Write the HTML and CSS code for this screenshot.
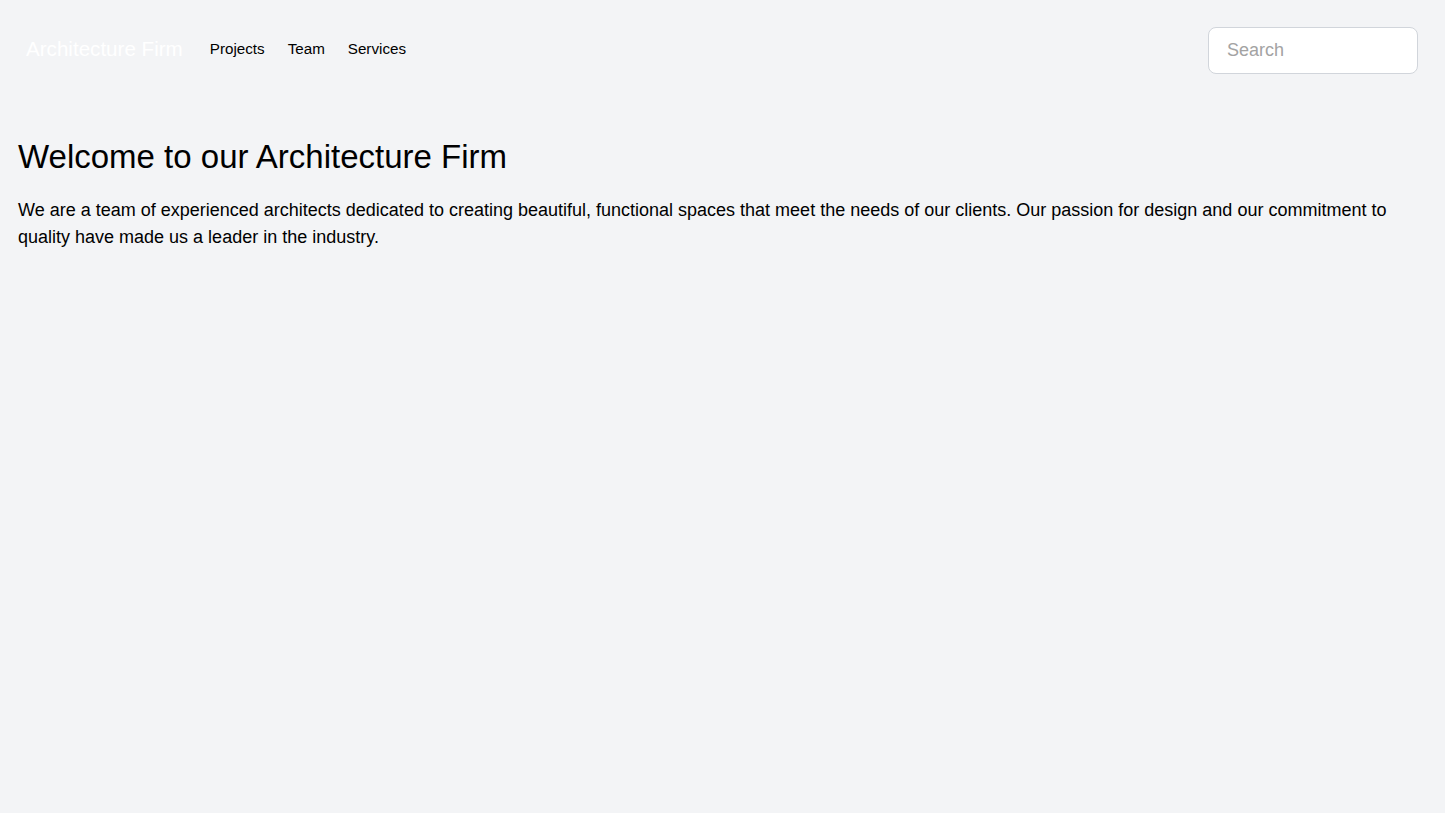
FILE: index.html
```html
<!DOCTYPE html>
<html lang="en">
<head>
<meta charset="utf-8">
<title>Architecture Firm</title>
<link rel="stylesheet" href="styles.css">
</head>
<body>
<header class="nav">
  <div class="nav-left">
    <a class="logo" href="#">Architecture Firm</a>
    <ul class="links">
      <li><a href="#">Projects</a></li>
      <li><a href="#">Team</a></li>
      <li><a href="#">Services</a></li>
    </ul>
  </div>
  <input class="search" type="text" placeholder="Search">
</header>
<main class="main">
  <h1 class="title">Welcome to our Architecture Firm</h1>
  <p class="intro">We are a team of experienced architects dedicated to creating beautiful, functional spaces that meet the needs of our clients. Our passion for design and our commitment to quality have made us a leader in the industry.</p>
</main>
</body>
</html>
```
FILE: styles.css
```css
* { box-sizing: border-box; }
html, body { margin: 0; padding: 0; }
body {
  background: #f3f4f6;
  font-family: "Liberation Sans", Arial, sans-serif;
  color: #000;
  min-height: 813px;
}
.nav {
  display: flex;
  align-items: flex-start;
  justify-content: space-between;
  padding: 27px 27px 27px 26px;
}
.nav-left {
  display: flex;
  align-items: center;
  margin-top: 8px;
}
.logo {
  color: #fff;
  font-size: 20.6px;
  line-height: 28px;
  text-decoration: none;
  margin-right: 27px;
}
.links {
  display: flex;
  list-style: none;
  margin: 0;
  padding: 0;
  gap: 23px;
}
.links a {
  color: #000;
  font-size: 15.2px;
  line-height: 20px;
  text-decoration: none;
}
.search {
  width: 210px;
  height: 47px;
  border: 1px solid #d1d5db;
  border-radius: 8px;
  background: #fff;
  padding: 0 18px;
  font-family: inherit;
  font-size: 18px;
  color: #000;
  outline: none;
}
.search::placeholder { color: #a3a3a3; }
.main {
  padding: 36px 18px 0;
}
.title {
  margin: 0 0 20px;
  font-size: 33px;
  line-height: 40px;
  font-weight: 400;
}
.intro {
  margin: 0;
  font-size: 18px;
  line-height: 27px;
}
```
